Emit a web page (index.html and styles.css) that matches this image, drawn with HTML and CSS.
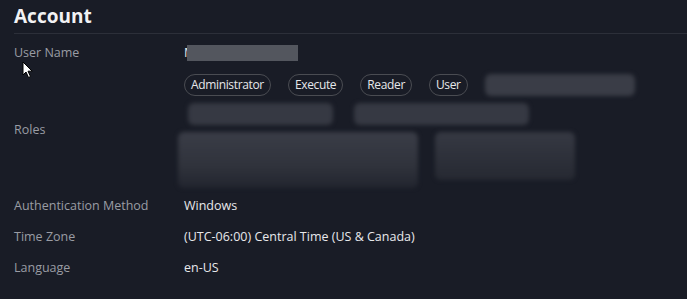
FILE: index.html
```html
<!DOCTYPE html>
<html>
<head>
<meta charset="utf-8">
<link rel="stylesheet" href="styles.css">
</head>
<body>
<div class="page">
  <h1 class="title">Account</h1>
  <div class="rule"></div>
  <div class="grid">
    <div class="label row-user">User Name</div>
    <div class="value row-user"><span class="init">M</span><span class="mask mask-user"></span></div>

    <div class="label roles-label">Roles</div>
    <div class="value roles">
      <div class="chips">
        <span class="chip">Administrator</span>
        <span class="chip">Execute</span>
        <span class="chip">Reader</span>
        <span class="chip">User</span>
        <span class="chip chip-blur w1"></span>
      </div>
      <div class="chips line2">
        <span class="chip chip-blur w2"></span>
        <span class="chip chip-blur w3"></span>
      </div>
      <div class="chips line3">
        <span class="chip chip-blur w4"></span>
        <span class="chip chip-blur w5"></span>
      </div>
    </div>

    <div class="label">Authentication Method</div>
    <div class="value">Windows</div>
    <div class="label">Time Zone</div>
    <div class="value">(UTC-06:00) Central Time (US &amp; Canada)</div>
    <div class="label">Language</div>
    <div class="value">en-US</div>
  </div>
  <svg class="cursor" width="12" height="18" viewBox="0 0 12 18">
    <path d="M1 1 L1 14 L4 11 L6.5 16.5 L8.5 15.5 L6 10.2 L10.2 10.2 Z" fill="#ffffff" stroke="#000000" stroke-width="1"/>
  </svg>
</div>
</body>
</html>
```
FILE: styles.css
```css
* { box-sizing: border-box; }
html, body { margin: 0; padding: 0; background: #191c26; }
body {
  font-family: "Open Sans", "Noto Sans", sans-serif;
  font-size: 12.5px;
  color: #e6e7ea;
  width: 687px;
  height: 299px;
  overflow: hidden;
}
.page { position: relative; padding: 4px 0 0 14px; }
.title {
  margin: 0;
  font-size: 19px;
  font-weight: 700;
  color: #f2f2f4;
  line-height: 24px;
}
.rule { height: 1px; background: #2c2f39; margin-top: 5px; }
.grid {
  display: grid;
  grid-template-columns: 170px 1fr;
  grid-auto-rows: minmax(31px, auto);
  align-items: center;
  margin-top: 3px;
}
.label { color: #9a9ca4; }
.value { color: #e8e9ec; }
.row-user { height: 31px; display: flex; align-items: center; }
.init { display: inline-block; }
.mask {
  display: inline-block;
  background: #53565e;
  filter: blur(0.6px);
}
.mask-user { width: 111px; height: 16px; margin-left: -8px; position: relative; }
.roles { display: flex; flex-direction: column; padding-top: 5px; }
.roles-label { align-self: center; }
.chips { display: flex; gap: 17px; height: 23px; align-items: center; }
.line2 { margin-top: 7px; height: 22px; }
.line3 { margin-top: 7px; height: 58px; align-items: flex-start; }
.chip {
  display: inline-flex;
  align-items: center;
  height: 22px;
  padding: 0 6px;
  border: 1px solid #4a4c52;
  border-radius: 11px;
  color: #e6e7ea;
  font-size: 12px;
  letter-spacing: -0.35px;
}
.chip-blur {
  border: none;
  background: #363943;
  filter: blur(2px);
  border-radius: 6px;
}
.w1 { width: 150px; background: #3a3d47; }
.w2 { width: 145px; margin-left: 4px; }
.w3 { width: 175px; margin-left: 4px; }
.w4 { width: 240px; height: 56px; margin-left: -6px; background: linear-gradient(180deg, #3a3d47 0%, #30333c 60%, #22252f 100%); }
.w5 { width: 140px; height: 48px; background: linear-gradient(180deg, #363943 0%, #262932 100%); }
.cursor { position: absolute; left: 22px; top: 61px; }
```
